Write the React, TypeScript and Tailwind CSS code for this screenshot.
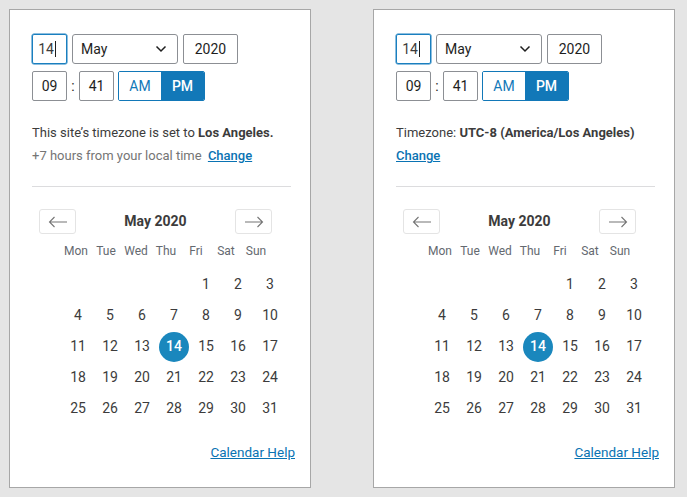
import React from "react";

const weekdays = ["Mon", "Tue", "Wed", "Thu", "Fri", "Sat", "Sun"];
const weeks: (number | null)[][] = [
  [null, null, null, null, 1, 2, 3],
  [4, 5, 6, 7, 8, 9, 10],
  [11, 12, 13, 14, 15, 16, 17],
  [18, 19, 20, 21, 22, 23, 24],
  [25, 26, 27, 28, 29, 30, 31],
];

function Chevron() {
  return (
    <svg width="12" height="8" viewBox="0 0 12 8" fill="none">
      <path d="M1.5 1.5 L6 6 L10.5 1.5" stroke="#1e1e1e" strokeWidth="1.5" />
    </svg>
  );
}

function ArrowLeft() {
  return (
    <svg width="20" height="12" viewBox="0 0 20 12" fill="none">
      <path d="M19 6 H1.5 M6.5 1 L1.5 6 L6.5 11" stroke="#757575" strokeWidth="1.1" />
    </svg>
  );
}
function ArrowRight() {
  return (
    <svg width="20" height="12" viewBox="0 0 20 12" fill="none">
      <path d="M1 6 H18.5 M13.5 1 L18.5 6 L13.5 11" stroke="#757575" strokeWidth="1.1" />
    </svg>
  );
}

function Panel({ variant }: { variant: "a" | "b" }) {
  return (
    <div className="w-[302px] h-[479px] shrink-0 border border-[#a7a7a7] bg-white pl-[22px] pt-[24px] text-[#3c3c3c]">
      <div className="flex gap-[5px] h-[30px]">
        <div className="w-[35px] h-[30px] border border-[#1a7fbf] rounded-[2px] flex items-center justify-end pr-[10px] text-[14px] shadow-[0_0_0_0.5px_#1a7fbf]">
          <span>14</span>
          <span className="w-px h-[16px] bg-[#1e1e1e] ml-px" />
        </div>
        <div className="w-[106px] h-[30px] border border-[#8c8f94] rounded-[3px] flex items-center justify-between pl-[8px] pr-[10px] text-[14px] text-[#1e1e1e]">
          <span>May</span>
          <Chevron />
        </div>
        <div className="w-[55px] h-[30px] border border-[#8c8f94] rounded-[2px] flex items-center justify-center text-[14px] text-[#1e1e1e]">
          2020
        </div>
      </div>
      <div className="flex items-center mt-[7px] h-[30px]">
        <div className="w-[35px] h-[30px] border border-[#8c8f94] rounded-[2px] flex items-center justify-center text-[14px] text-[#1e1e1e]">
          09
        </div>
        <div className="w-[12px] text-center text-[14px] text-[#1e1e1e]">:</div>
        <div className="w-[35px] h-[30px] border border-[#8c8f94] rounded-[2px] flex items-center justify-center text-[14px] text-[#1e1e1e]">
          41
        </div>
        <div className="ml-[4px] flex h-[30px] rounded-[2px] border border-[#1278b8] overflow-hidden">
          <div className="w-[42px] flex items-center justify-center text-[14px] text-[#1278b8] bg-white">AM</div>
          <div className="w-[43px] flex items-center justify-center text-[14px] text-white bg-[#1278b8] font-medium">PM</div>
        </div>
      </div>
      {variant === "a" ? (
        <>
          <div className="mt-[22px] h-[20px] leading-[20px] text-[13px]">
            This site’s timezone is set to <span className="font-bold">Los Angeles.</span>
          </div>
          <div className="mt-[3px] h-[20px] leading-[20px] text-[13px] text-[#757575]">
            +7 hours from your local time{" "}
            <span className="ml-[3px] text-[#0a73b3] underline font-medium">Change</span>
          </div>
        </>
      ) : (
        <>
          <div className="mt-[22px] h-[20px] leading-[20px] text-[13px]">
            Timezone: <span className="font-bold">UTC-8 (America/Los Angeles)</span>
          </div>
          <div className="mt-[3px] h-[20px] leading-[20px] text-[13px]">
            <span className="text-[#0a73b3] underline font-medium">Change</span>
          </div>
        </>
      )}
      <div className="mt-[20px] w-[259px] h-px bg-[#dcdcde]" />
      <div className="mt-[22px] w-[259px] flex items-center h-[25px] pl-[7px] pr-[19px]">
        <div className="w-[37px] h-[25px] border border-[#e4e4e4] rounded-[3px] flex items-center justify-center">
          <ArrowLeft />
        </div>
        <div className="flex-1 text-center text-[14px] font-bold text-[#3c3c3c]">May 2020</div>
        <div className="w-[37px] h-[25px] border border-[#e4e4e4] rounded-[3px] flex items-center justify-center">
          <ArrowRight />
        </div>
      </div>
      <div className="mt-[9px] ml-[29px] flex h-[16px] items-center">
        {weekdays.map((d) => (
          <div key={d} className="w-[30px] text-center text-[12px] text-[#646970]">
            {d}
          </div>
        ))}
      </div>
      <div className="mt-[10px] ml-[30px] flex flex-col">
        {weeks.map((w, i) => (
          <div key={i} className="flex h-[31px]">
            {w.map((d, j) => (
              <div key={j} className="w-[32px] h-[31px] flex items-center justify-center">
                {d === 14 ? (
                  <div className="w-[30px] h-[30px] rounded-full bg-[#1a87bd] text-white flex items-center justify-center text-[14px] font-medium">
                    14
                  </div>
                ) : d ? (
                  <span className="text-[14px] text-[#3c3c3c]">{d}</span>
                ) : null}
              </div>
            ))}
          </div>
        ))}
      </div>
      <div className="mt-[18px] w-[263px] h-[20px] leading-[20px] text-right text-[13.5px] text-[#0a73b3] underline">
        Calendar Help
      </div>
    </div>
  );
}

export default function App() {
  return (
    <div
      className="w-[687px] h-[497px] bg-[#e5e5e5] flex gap-[62px] pl-[9px] pt-[9px]"
      style={{ fontFamily: "Roboto, 'Liberation Sans', sans-serif" }}
    >
      <Panel variant="a" />
      <Panel variant="b" />
    </div>
  );
}
